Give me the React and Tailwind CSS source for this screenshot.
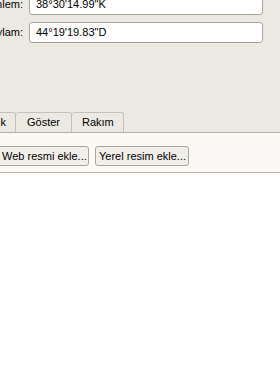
import React from "react";

const font = { fontFamily: "'Liberation Sans', Arial, sans-serif" };

function Field({ label, value }) {
  return (
    <div className="flex items-center h-[21px]">
      <div className="w-[23px] flex justify-end whitespace-nowrap text-[11px] text-black">
        {label}
      </div>
      <div className="ml-[6px] w-[234px] h-[21px] bg-white border border-[#a7a49c] rounded-[3px] flex items-center pl-[6px] text-[11px] text-black">
        {value}
      </div>
    </div>
  );
}

export default function App() {
  return (
    <div className="w-[280px] h-[378px] overflow-hidden bg-white" style={font}>
      <div className="bg-[#ece9e3]">
        <div className="-mt-[6px] flex flex-col gap-[7px]">
          <Field label="Enlem:" value={"38°30'14.99\"K"} />
          <Field label="Boylam:" value={"44°19'19.83\"D"} />
        </div>

        <div className="h-[69px]" />

        <div className="flex items-end h-[20px] text-[11px] text-black">
          <div className="w-[16px] h-[20px] bg-[#ece9e3] border border-b-0 border-l-0 border-[#c5c1b8] rounded-tr-[3px] flex items-center justify-end pr-[9px] overflow-hidden whitespace-nowrap">
            k
          </div>
          <div className="w-[56px] h-[20px] bg-[#ece9e3] border border-b-0 border-l-0 border-[#c5c1b8] rounded-t-[3px] flex items-center pl-[11px]">
            Göster
          </div>
          <div className="w-[52px] h-[20px] bg-[#ece9e3] border border-b-0 border-l-0 border-[#c5c1b8] rounded-t-[3px] flex items-center pl-[10px]">
            Rakım
          </div>
        </div>
      </div>

      <div className="bg-[#fbf9f6] border-t border-b border-[#b4b0a8] h-[41px] pt-[13px] flex gap-[6px] text-[11px] text-black">
        <button className="-ml-[4px] w-[93px] h-[20px] bg-[#f2efea] border border-[#a9a59d] rounded-[3px] flex items-center pl-[5px] whitespace-nowrap">
          Web resmi ekle...
        </button>
        <button className="w-[94px] h-[20px] bg-[#f2efea] border border-[#a9a59d] rounded-[3px] flex items-center pl-[3px] whitespace-nowrap">
          Yerel resim ekle...
        </button>
      </div>
    </div>
  );
}
